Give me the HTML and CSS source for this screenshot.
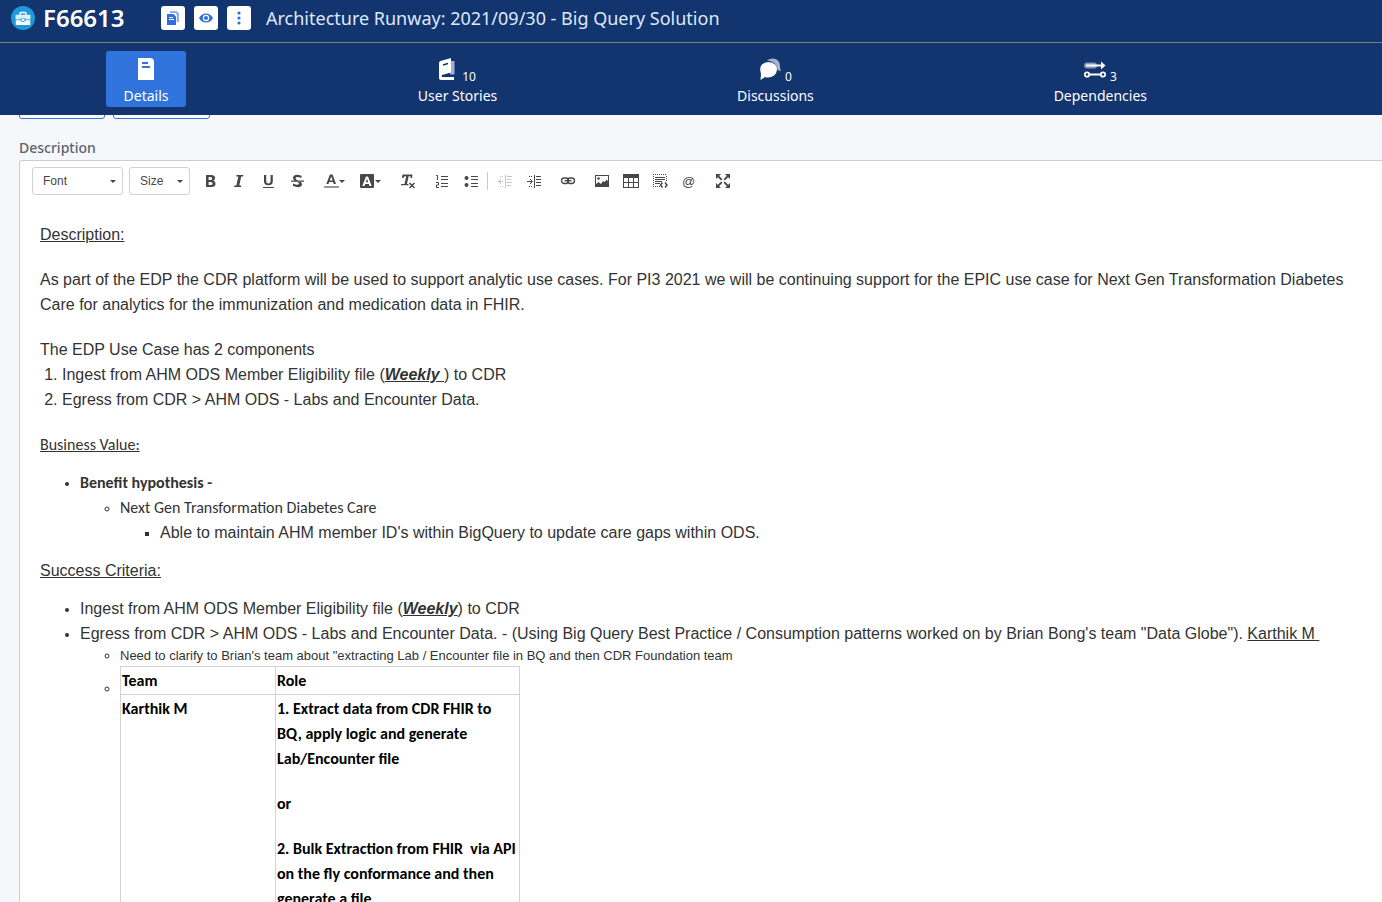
FILE: index.html
```html
<!DOCTYPE html>
<html lang="en">
<head>
<meta charset="utf-8">
<title>F66613 Architecture Runway</title>
<link rel="stylesheet" href="styles.css">
</head>
<body>
<header class="titlebar">
  <svg class="type-icon" viewBox="0 0 24 24" aria-hidden="true"><circle cx="12" cy="12" r="12" fill="#2199d8"/><path d="M9 9V7.400q0-.9.9-.9h4.200q.9 0 .9.900V9" fill="none" stroke="#fff" stroke-width="1.400"/><path d="M5.200 8.800h13.600q.7 0 .7.700V13.500h-4.700v-1h-5.600v1H4.500V9.500q0-.7.7-.7z" fill="#d9effa"/><path d="M4.800 14.200h4.500q.4 1.800 2.700 1.800t2.700-1.800h4.500v4.300q0 .6-.6.600H5.400q-.6 0-.6-.6z" fill="#fff"/><path d="M10.500 13h3v1.200q-.3.900-1.500.9t-1.500-.9z" fill="#fff"/></svg>
  <span class="item-id">F66613</span>
  <div class="actions">
    <button class="action" type="button" aria-label="Copy"><svg width="14" height="16" viewBox="0 0 14 16"><path d="M4 1h6.500L13 3.500V12h-2.200V4.500L9.500 3H4z" fill="#8fb0ea"/><path d="M1 4h6.500L10 6.500V15H1z" fill="#2f6fd9"/><path d="M3 7.500h4M3 9.500h5" stroke="#fff"/></svg></button>
    <button class="action" type="button" aria-label="Watch"><svg width="16" height="12" viewBox="0 0 16 12"><path d="M1 6q2.500-4.500 7-4.500T15 6q-2.500 4.500-7 4.500T1 6z" fill="#2f6fd9"/><circle cx="8" cy="6" r="3.200" fill="#fff"/><circle cx="8" cy="6" r="2" fill="#2f6fd9"/></svg></button>
    <button class="action" type="button" aria-label="More"><svg width="4" height="14" viewBox="0 0 4 14" fill="#2f6fd9"><circle cx="2" cy="2" r="1.600"/><circle cx="2" cy="7" r="1.600"/><circle cx="2" cy="12" r="1.600"/></svg></button>
  </div>
  <h1 class="item-title">Architecture Runway: 2021/09/30 - Big Query Solution</h1>
</header>
<nav class="tabs">
  <button class="tab tab-active" type="button"><span class="tab-top"><svg width="16" height="22" viewBox="0 0 16 22"><path d="M0 0h12q4 0 4 4v18H0z" fill="#fff"/><path d="M4 5h6M4 9h8" stroke="#3173dc" stroke-width="2"/></svg></span><span>Details</span></button>
  <button class="tab" type="button"><span class="tab-top tab-top-wide"><svg width="16" height="22" viewBox="0 0 16 22"><path d="M12 3h3.500v13.500H11z" fill="#a3b2d0"/><path d="M0 5q0-1.500 1.500-2L12 0v14.500L3 17q-1 .8 0 1.500h12V22H2q-2 0-2-2z" fill="#fff"/><path d="M4 7l5-1.500" stroke="#12346f" stroke-width="1.500"/><path d="M3 18.500h12" stroke="#12346f"/></svg><span class="count">10</span></span><span>User Stories</span></button>
  <button class="tab" type="button"><span class="tab-top"><svg width="22" height="22" viewBox="0 0 22 22"><path d="M8 2.200Q11 .2 14.500.5 21 1.500 21 8v2l1 3q-3 0-4-2Q18 4 8 2.200z" fill="#a3b2d0"/><path d="M9.500 4Q18 4.500 18 12q-1 7-8.500 7.500-2 0-3.500-.5l-4.500 3 .5-6Q0 9 3 6.500 5.500 4 9.500 4z" fill="#fff"/></svg><span class="count">0</span></span><span>Discussions</span></button>
  <button class="tab" type="button"><span class="tab-top"><svg width="22" height="22" viewBox="0 0 22 22"><path d="M3 7.500h7" stroke="#8395bd" stroke-width="6" stroke-linecap="round"/><path d="M2 7.500h16M4 16.500h14" stroke="#fff" stroke-width="1.800"/><path d="M17 3.500l4.500 4-4.500 4z" fill="#fff"/><circle cx="3" cy="16.500" r="2.200" fill="#12346f" stroke="#fff" stroke-width="1.800"/><circle cx="19" cy="16.500" r="2.200" fill="#12346f" stroke="#fff" stroke-width="1.800"/></svg><span class="count">3</span></span><span>Dependencies</span></button>
</nav>
<main class="page">
  <div class="outline-row">
    <button class="outline outline-a" type="button" aria-label="Previous section"></button>
    <button class="outline outline-b" type="button" aria-label="Next section"></button>
  </div>
  <h2 class="field-label" id="desc">Description</h2>
  <section class="editor" aria-labelledby="desc">
    <div class="toolbar" role="toolbar">
      <div class="combos">
        <label class="combo combo-font"><select aria-label="Font"><option>Font</option></select><svg class="caret" viewBox="0 0 6 3"><path d="M0 0h6L3 3z"/></svg></label>
        <label class="combo combo-size"><select aria-label="Size"><option>Size</option></select><svg class="caret" viewBox="0 0 6 3"><path d="M0 0h6L3 3z"/></svg></label>
      </div>
      <div class="group">
        <button class="tool" type="button" aria-label="Bold"><svg viewBox="0 0 16 16"><path fill-rule="evenodd" d="M4 2h5q4 0 4 3.200 0 2-1.800 2.600 2.300.6 2.300 2.900Q13.500 14 9.300 14H4zM6.600 4v3h1.800q1.900 0 1.900-1.500T8.400 4zM6.600 9v3h2q2.100 0 2.100-1.500T8.600 9z"/></svg></button>
        <button class="tool" type="button" aria-label="Italic"><svg viewBox="0 0 16 16"><path d="M5.500 2h7l-.4 1.500h-1.900L8.300 12.500h2L10 14H3l.4-1.500h2L7.300 3.500H5.100z"/></svg></button>
        <button class="tool" type="button" aria-label="Underline"><svg viewBox="0 0 16 16"><path d="M4 2h2.200v6q0 2.500 2.200 2.500T10.600 8V2h2.200v6.200q0 4.100-4.400 4.100T4 8.200zM3 14h11v1H3z"/></svg></button>
        <button class="tool" type="button" aria-label="Strikethrough"><svg viewBox="0 0 16 16"><path d="M12.500 5V2.800Q5-.2 4 4.800q0 2 1.500 2.700H9Q6.500 6.500 6.500 5.200 7.500 2.800 12.500 5zM8 9q2.500.7 2 1.700-1 2.300-6-.2v2.600q8 2.700 9-1.600 0-1.500-1-2.500zM2 7.500h13v1.200H2z"/></svg></button>
      </div>
      <div class="group">
        <button class="tool tool-wide" type="button" aria-label="Text color"><svg viewBox="0 0 16 16"><path fill-rule="evenodd" d="M6.900 1.500h2.700L13 11h-2.200L10 9H6.200l-.7 2H3.300zM8.200 3.500L6.700 7.500h3z"/><path d="M1 13h15v2H1z" fill="#999"/></svg><svg class="caret" viewBox="0 0 6 3"><path d="M0 0h6L3 3z"/></svg></button>
        <button class="tool tool-wide" type="button" aria-label="Background color"><svg viewBox="0 0 16 16"><path fill-rule="evenodd" d="M2 1h12q1 0 1 1v12q0 1-1 1H2q-1 0-1-1V2q0-1 1-1zm5 2.500L3.300 13h2.200l.7-2h3.600l.7 2h2.200L9 3.500zm1 2.300L9.200 9.300H6.800z"/></svg><svg class="caret" viewBox="0 0 6 3"><path d="M0 0h6L3 3z"/></svg></button>
      </div>
      <div class="group">
        <button class="tool" type="button" aria-label="Remove format"><svg viewBox="0 0 16 16"><path d="M2.500 1.500h10L12 5h-1.500l.2-1.700H8.600L7 11h1.500v1.300H1V11h3.500l1.700-7.700H4.500L3.500 5H2z"/><path d="M9.500 10l5 5M14.500 10l-5 5" fill="none" stroke="currentColor" stroke-width="1.500"/></svg></button>
      </div>
      <div class="group">
        <button class="tool" type="button" aria-label="Numbered list"><svg viewBox="0 0 16 16" fill="none" stroke="currentColor"><path d="M2 2.500h1.500V7M2 9.500h2.500V12H2.500v2.500H5"/><path d="M7 3.500h7M7 6.500h7M7 10.500h7M7 13.500h7"/></svg></button>
        <button class="tool" type="button" aria-label="Bullet list"><svg viewBox="0 0 16 16"><circle cx="3.500" cy="5" r="2"/><circle cx="3.500" cy="12" r="2"/><path d="M8 3h7v1H8zM8 6h7v1H8zM8 10h7v1H8zM8 13h7v1H8z"/></svg></button>
        <span class="sep"></span>
        <button class="tool" type="button" aria-label="Outdent" disabled><svg viewBox="0 0 16 16" fill="none" stroke="currentColor"><path d="M8.500 2v13M10 3.500h5M10 6.500h4M10 9.500h5M10 12.500h4M1 8.500h5M4 6L1.500 8.500 4 11"/><path d="M3 3.500h4M3 13.500h4" stroke-dasharray="1 1"/></svg></button>
        <button class="tool" type="button" aria-label="Indent"><svg viewBox="0 0 16 16" fill="none" stroke="currentColor"><path d="M8.500 2v13M10 3.500h5M10 6.500h5M10 9.500h5M10 12.500h5M1 8.500h5M4 6l2.500 2.500L4 11"/><path d="M3 3.500h4M3 13.500h4" stroke-dasharray="1 1"/></svg></button>
      </div>
      <div class="group">
        <button class="tool" type="button" aria-label="Link"><svg viewBox="0 0 16 16" fill="none" stroke="currentColor" stroke-width="1.300"><rect x="1.500" y="5" width="7" height="5.500" rx="2.700"/><rect x="7.500" y="5" width="7" height="5.500" rx="2.700"/><path d="M4.500 7.700h7"/></svg></button>
      </div>
      <div class="group">
        <button class="tool" type="button" aria-label="Image"><svg viewBox="0 0 16 16"><path fill-rule="evenodd" d="M1 2h14v12H1zm1 1v8l2.500-2L7 11l2-3 1.500 1L13 6.500l1 2V3z"/><circle cx="4.500" cy="5.500" r="1.300"/></svg></button>
        <button class="tool" type="button" aria-label="Table"><svg viewBox="0 0 16 16"><path fill-rule="evenodd" d="M0 1h16v14H0zm1 4v4h4V5zm5 0v4h4V5zm5 0v4h4V5zM1 10v4h4v-4zm5 0v4h4v-4zm5 0v4h4v-4z"/></svg></button>
        <button class="tool" type="button" aria-label="Source block"><svg viewBox="0 0 16 16" fill="none" stroke="currentColor"><path d="M1 1.500h14M1.500 3v11M14.500 3v5M1 13.500h7" stroke-dasharray="1 1"/><path d="M3 4.500h10M3 6.500h10M3 8.500h7M3 10.500h5"/><path d="M10.500 9.500L8.500 12l2 2.500M13 9.500l2 2.500-2 2.500" stroke-width="1.500"/></svg></button>
        <button class="tool tool-at" type="button" aria-label="Mention">@</button>
      </div>
      <div class="group">
        <button class="tool" type="button" aria-label="Maximize"><svg viewBox="0 0 16 16"><path d="M1 1h5L1 6zM15 1v5l-5-5zM1 15v-5l5 5zM15 15h-5l5-5z"/><path d="M2 2l4.800 4.800M14 2L9.200 6.800M2 14l4.800-4.800M14 14L9.200 9.200" stroke="currentColor" stroke-width="1.800"/></svg></button>
      </div>
    </div>
    <article class="doc">
      <p><u>Description:</u></p>
      <p>As part of the EDP the CDR platform will be used to support analytic use cases. For PI3 2021 we will be continuing support for the EPIC use case for Next Gen Transformation Diabetes Care for analytics for the immunization and medication data in FHIR.</p>
      <div>The EDP Use Case has 2 components</div>
      <ol>
        <li>Ingest from AHM ODS Member Eligibility file (<b><i><u>Weekly </u></i></b>) to CDR</li>
        <li>Egress from CDR &gt; AHM ODS - Labs and Encounter Data.</li>
      </ol>
      <h3 class="humanist"><u>Business Value:</u></h3>
      <ul>
        <li class="humanist"><b>Benefit hypothesis -</b>
          <ul>
            <li>Next Gen Transformation Diabetes Care
              <ul><li class="plain">Able to maintain AHM member ID's within BigQuery to update care gaps within ODS.</li></ul>
            </li>
          </ul>
        </li>
      </ul>
      <h3><u>Success Criteria:</u></h3>
      <ul>
        <li>Ingest from AHM ODS Member Eligibility file (<b><i><u>Weekly</u></i></b>) to CDR</li>
        <li>Egress from CDR &gt; AHM ODS - Labs and Encounter Data. - (Using Big Query Best Practice / Consumption patterns worked on by Brian Bong's team "Data Globe"). <u>Karthik M&nbsp;</u>
          <ul class="notes">
            <li>Need to clarify to Brian's team about "extracting Lab / Encounter file in BQ and then CDR Foundation team</li>
            <li>
              <table class="roles">
                <tr><th scope="col">Team</th><th scope="col">Role</th></tr>
                <tr><td>Karthik M</td><td><p>1. Extract data from CDR FHIR to BQ, apply logic and generate Lab/Encounter file</p><p>or</p><p>2. Bulk Extraction from FHIR&nbsp; via API on the fly conformance and then generate a file</p></td></tr>
              </table>
            </li>
          </ul>
        </li>
      </ul>
    </article>
  </section>
</main>
</body>
</html>
```

FILE: styles.css
```css
* { box-sizing: border-box; }

body {
  margin: 0;
  height: 100vh;
  display: flex;
  flex-direction: column;
  overflow: hidden;
  background: #f5f7fb;
  font-family: "Noto Sans", "Open Sans", sans-serif;
  font-size: 14px;
}

button, select { font: inherit; margin: 0; }

.titlebar {
  flex: none;
  display: flex;
  align-items: center;
  height: 43px;
  padding: 0 11px 6px;
  background: #12346f;
  border-bottom: 1px solid #7b8085;
  color: #fff;
}
.type-icon { width: 24px; height: 24px; }
.item-id { margin-left: 8px; width: 118px; font-size: 24px; font-weight: 600; line-height: 30px; }
.actions { display: flex; gap: 9px; }
.action {
  display: flex;
  align-items: center;
  justify-content: center;
  width: 24px;
  height: 24px;
  padding: 0;
  border: 0;
  border-radius: 3px;
  background: #fff;
}
.item-title { margin: 0 0 0 15px; font-size: 18px; font-weight: 400; line-height: 26px; color: #dfe9fb; }

.tabs {
  flex: none;
  display: flex;
  justify-content: space-between;
  align-items: flex-start;
  height: 72px;
  padding: 8px 227px 0 106px;
  background: #12346f;
}
.tab {
  display: flex;
  flex-direction: column;
  align-items: center;
  min-width: 80px;
  height: 56px;
  padding: 7px 8px 0;
  border: 0;
  border-radius: 3px;
  background: transparent;
  color: #fff;
  line-height: 20px;
}
.tab-active { background: #3173dc; }
.tab-top { display: flex; align-items: flex-end; gap: 4px; height: 28px; padding-bottom: 6px; }
.tab-top-wide { gap: 7px; }
.count { font-size: 12px; line-height: 6px; }

.page { flex: 1; min-height: 0; overflow: hidden; padding-left: 19px; }
.outline-row { display: flex; gap: 8px; margin-top: -24px; }
.outline { height: 28px; border: 1px solid #3173dc; border-radius: 3px; background: #fff; }
.outline-a { width: 86px; }
.outline-b { width: 97px; }
.field-label { margin: 19px 0 2px; font-size: 14px; font-weight: 500; line-height: 20px; color: #5c6470; }

.editor {
  border: 1px solid #c3cddf;
  border-right: 0;
  border-radius: 3px 0 0 0;
  background: #fff;
  font-family: "Liberation Sans", Arial, sans-serif;
}
.toolbar { display: flex; align-items: center; gap: 5px; height: 40px; padding-left: 12px; color: #474747; }
.combos { display: flex; gap: 6px; }
.combo { display: flex; position: relative; }
.combo select {
  appearance: none;
  width: 100%;
  height: 28px;
  padding: 0 10px;
  border: 1px solid #d1d1d1;
  border-radius: 3px;
  background: #fff;
  color: #474747;
  font-size: 12px;
}
.combo-font { width: 91px; }
.combo-size { width: 61px; }
.caret { width: 6px; height: 3px; fill: #474747; }
.combo .caret { position: absolute; right: 7px; top: 13px; }
.group { display: flex; align-items: center; }
.tool {
  display: flex;
  align-items: center;
  justify-content: center;
  width: 29px;
  height: 28px;
  padding: 0;
  border: 0;
  background: transparent;
  color: #474747;
}
.tool svg:not(.caret) { width: 16px; height: 16px; }
.tool svg:not([fill]) { fill: currentColor; }
.tool:disabled { color: #c4c4c4; }
.tool-wide { width: 36px; }
.tool-at { font-size: 13px; }
.sep { width: 1px; height: 18px; margin: 0 2px; background: #c8c8c8; }

.doc { padding: 21px 20px 0; font-size: 16px; line-height: 25px; color: #333; }
.doc p { margin: 0 0 20px; }
.doc h3 { margin: 0; font-size: 16px; font-weight: 400; }
.doc ul { margin: 0; padding-left: 40px; }
.doc ol { margin: 0 0 20px; padding-left: 22px; }
.doc > ul { margin: 13px 0; }
.doc ul > li::marker { font-size: 13px; }
.doc .humanist { font-family: Carlito, Lato, sans-serif; }
.doc .plain { font-family: "Liberation Sans", Arial, sans-serif; }
.doc .notes { font-size: 13px; line-height: 20px; }

.roles {
  width: 400px;
  border-collapse: collapse;
  color: #000;
  font-family: Carlito, Lato, sans-serif;
  font-size: 16px;
  font-weight: 700;
  line-height: 25px;
}
.roles th, .roles td { padding: 1px; border: 1px solid #d3d3d3; text-align: left; vertical-align: top; }
.roles th:first-child { width: 155px; }
```
